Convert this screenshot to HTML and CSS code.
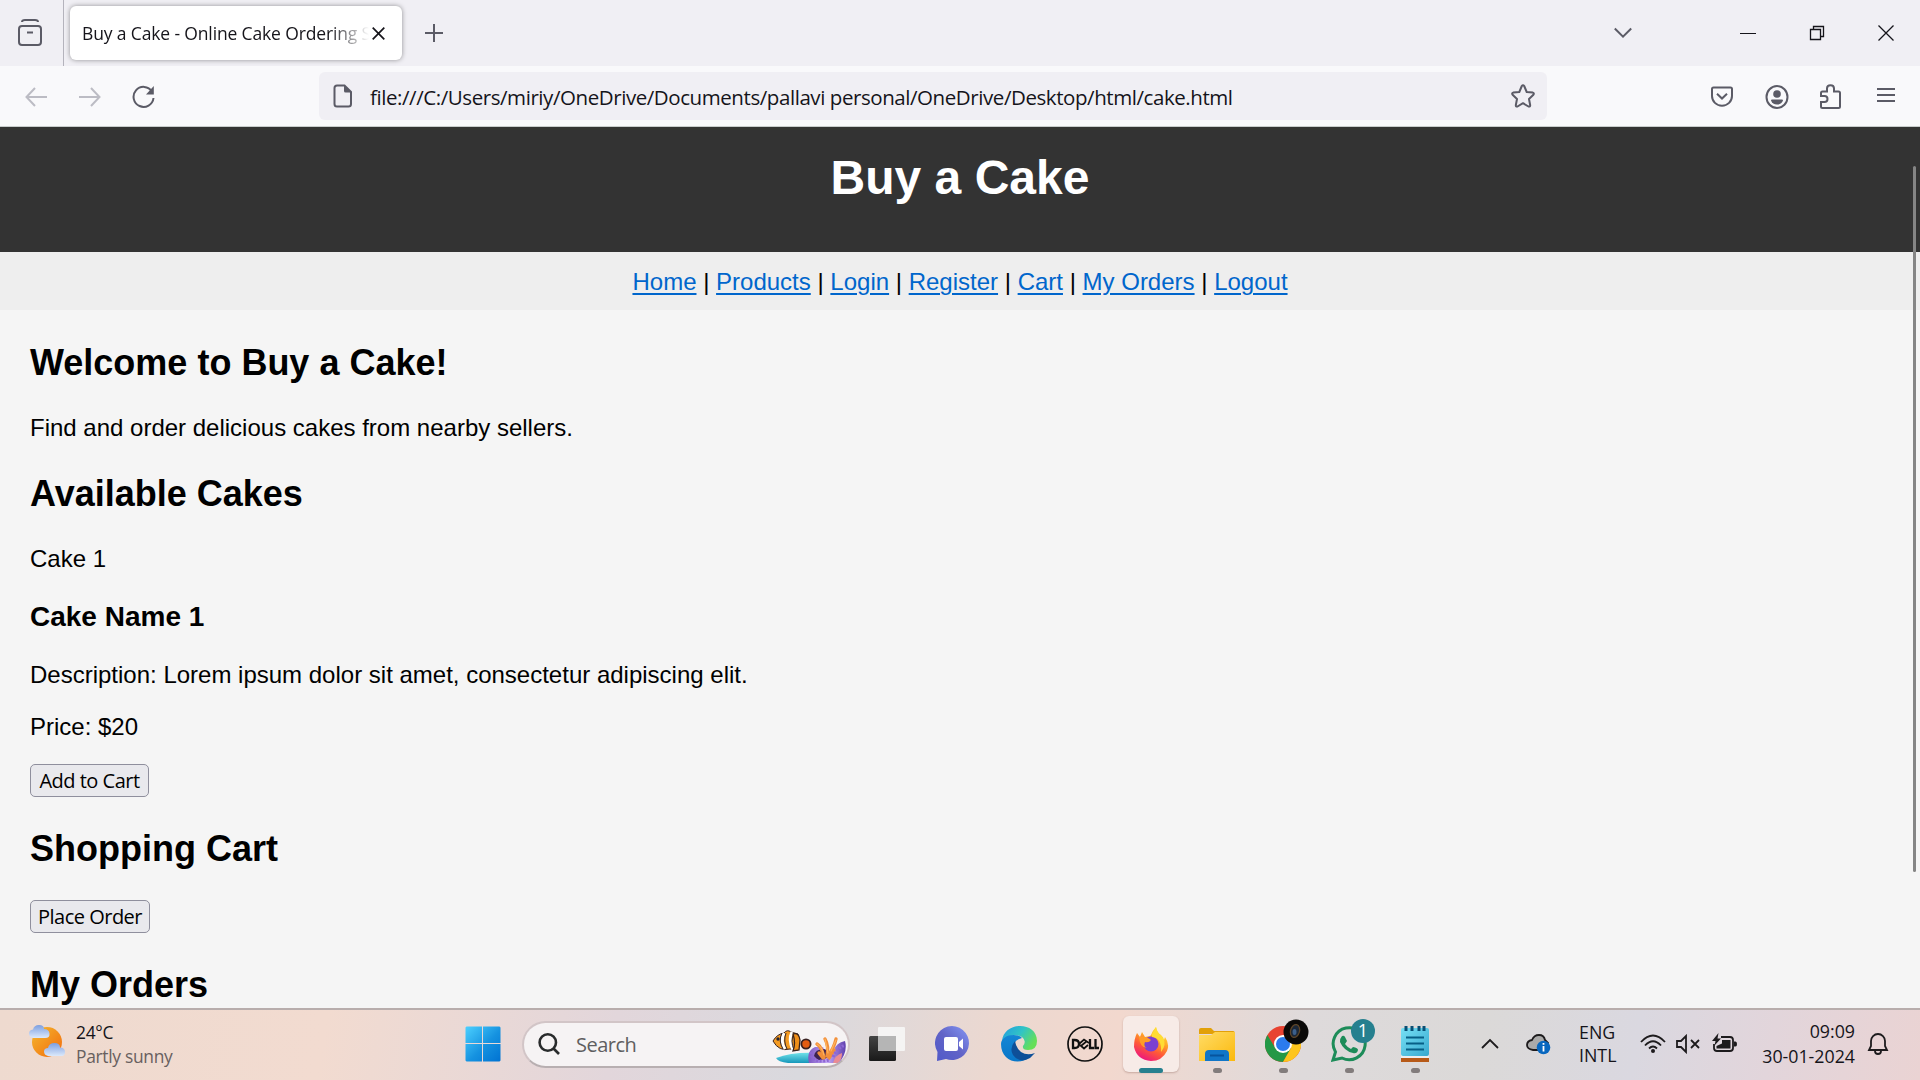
FILE: index.html
```html
<!DOCTYPE html>
<html lang="en">
<head>
<meta charset="utf-8">
<title>Buy a Cake - Online Cake Ordering System</title>
<link rel="stylesheet" href="styles.css">
</head>
<body>
<div class="tabs">
  <div class="view"><svg width="24" height="28" viewBox="0 0 24 28"><rect x="1" y="7" width="22" height="19" rx="3"/><path d="M4 3Q4 1 7 1H17Q20 1 20 3M9 13.500H15"/></svg></div>
  <div class="tab"><span class="tab-title">Buy a Cake - Online Cake Ordering System</span><svg width="13" height="13" viewBox="0 0 13 13"><path d="M.7.7 12.3 12.3M12.3.7.7 12.3"/></svg></div>
  <svg class="plus" width="18" height="18" viewBox="0 0 18 18"><path d="M9 0V18M0 9H18"/></svg>
  <div class="window-controls">
    <svg class="chev" width="18" height="12" viewBox="0 0 18 12"><path d="M.8 1.5 9 9.7 17.2 1.5"/></svg>
    <svg width="16" height="16" viewBox="0 0 16 16"><path d="M0 8.5H16" shape-rendering="crispEdges"/></svg>
    <svg width="16" height="16" viewBox="0 0 16 16"><path d="M1.5 4.5H11.5V14.5H1.5ZM4.5 4.5V1.5H14.5V11.5H11.5"/></svg>
    <svg width="16" height="16" viewBox="0 0 16 16"><path d="M.5.5 15.5 15.5M15.5.5.5 15.5"/></svg>
  </div>
</div>
<div class="toolbar">
  <div class="history">
    <svg class="dim" width="22" height="20" viewBox="0 0 22 20"><path d="M22 10H1.5M10 1 1.5 10 10 19"/></svg>
    <svg class="dim" width="22" height="20" viewBox="0 0 22 20"><path d="M0 10H20.5M12 1 20.5 10 12 19"/></svg>
    <svg width="24" height="24" viewBox="0 0 24 24"><path d="M20 6.500A10 10 0 1 0 21.500 13"/><path class="solid" d="M21.800 1V9.500H14Z"/></svg>
  </div>
  <div class="url">
    <svg width="20" height="24" viewBox="0 0 20 24"><path d="M4 1.5H11.5L18 8V20Q18 22.5 15.5 22.5H4Q1.5 22.5 1.5 20V4Q1.5 1.5 4 1.5Z"/><path class="solid" d="M11 1 18.5 8.5H12.5Q11 8.5 11 7Z"/></svg>
    <span class="address">file:///C:/Users/miriy/OneDrive/Documents/pallavi personal/OneDrive/Desktop/html/cake.html</span>
    <svg width="24" height="24" viewBox="0 0 24 24"><path stroke-linejoin="round" d="M10.8 2Q12 .3 13.2 2L15.7 8 21.8 8.6Q23.5 9.2 22.4 10.8L18 15 19.2 21.3Q19.2 23 17.5 22.5L12 19.2 6.5 22.5Q4.8 23 4.8 21.3L6 15 1.6 10.8Q.5 9.2 2.2 8.6L8.3 8Z"/></svg>
  </div>
  <div class="tools">
    <svg width="24" height="24" viewBox="0 0 24 24"><path d="M3.5 2.500H20.5Q22 2.500 22 4V11A10 9.7 0 0 1 2 11V4Q2 2.500 3.5 2.500ZM7 8.700 12 13.500 17 8.700"/></svg>
    <svg width="24" height="26" viewBox="0 0 24 26"><ellipse cx="12" cy="13" rx="10.500" ry="11"/><circle class="solid" cx="12" cy="10" r="3.8"/><path class="solid" d="M6 16.500Q6 15.500 7 15.500H17Q18 15.500 18 16.500Q16.500 20.500 12 20.500T6 16.500"/></svg>
    <svg width="24" height="26" viewBox="0 0 24 26"><path d="M2 12V9Q2 7.5 3.5 7.5H8V4.5Q8 1.2 11.5 1.2T15 4.5V7.5H19.5Q21 7.5 21 9V22.5Q21 24 19.5 24H3.5Q2 24 2 22.5V18H5.5Q8.5 18 8.5 15T5.5 12Z"/></svg>
    <svg width="24" height="24" viewBox="0 0 24 24"><path d="M3 4H21M3 10H21M3 16H21"/></svg>
  </div>
</div>
<div class="page">
  <header><h1>Buy a Cake</h1></header>
  <nav><a href="#">Home</a> | <a href="#">Products</a> | <a href="#">Login</a> | <a href="#">Register</a> | <a href="#">Cart</a> | <a href="#">My Orders</a> | <a href="#">Logout</a></nav>
  <main>
    <h2>Welcome to Buy a Cake!</h2>
    <p>Find and order delicious cakes from nearby sellers.</p>
    <h2>Available Cakes</h2>
    <p>Cake 1</p>
    <h3>Cake Name 1</h3>
    <p>Description: Lorem ipsum dolor sit amet, consectetur adipiscing elit.</p>
    <p class="price">Price: $20</p>
    <button class="add">Add to Cart</button>
    <h2>Shopping Cart</h2>
    <button class="order">Place Order</button>
    <h2>My Orders</h2>
  </main>
  <div class="scroll-thumb"></div>
</div>
<footer class="taskbar">
  <div class="weather">
    <svg width="37" height="36" viewBox="0 0 37 36"><defs><linearGradient id="sun" x1="0" y1="0" x2="1" y2="1"><stop stop-color="#f4b92f"/><stop offset="1" stop-color="#f26a0c"/></linearGradient><linearGradient id="cloud" x1="0" y1="0" x2="0" y2="1"><stop stop-color="#7c9fe0"/><stop offset="1" stop-color="#dce9fb"/></linearGradient></defs><circle cx="18" cy="18" r="15" fill="url(#sun)"/><path fill="url(#cloud)" d="M4 14Q0 13 0 9.500T4 5.500Q5 1 10 1T15 5Q20 5 20.500 9.500T16 14Z"/><path fill="url(#cloud)" d="M19 32Q15 31 15 27.500T19 24Q20 19 25.500 19T31 23.500Q36 23.500 36 28T32 32Z"/></svg>
    <div class="two-lines"><span>24°C</span><span class="muted">Partly sunny</span></div>
  </div>
  <div class="apps">
    <svg class="start" width="36" height="36" viewBox="0 0 36 36"><defs><linearGradient id="win" x1="0" y1="0" x2="1" y2="1"><stop stop-color="#4cd0ff"/><stop offset=".55" stop-color="#1592e0"/><stop offset="1" stop-color="#0072d2"/></linearGradient></defs><path fill="url(#win)" d="M1.500.5H17V17H.5V1.500ZM18 .5H34.500L35.500 1.500V17H18ZM.5 18H17V35.500H1.500L.5 34.500ZM18 18H35.500V34.500L34.500 35.500H18Z"/></svg>
    <div class="search">
      <svg class="lens" width="23" height="23" viewBox="0 0 23 23"><circle cx="9.800" cy="9.500" r="8.200"/><path d="M15.500 15.500 21 21"/></svg>
      <span>Search</span>
      <svg class="reef" width="74" height="36" viewBox="0 0 74 36"><defs><linearGradient id="sea" x1="0" y1="0" x2="0" y2="1"><stop stop-color="#6fe0e8"/><stop offset="1" stop-color="#1797ba"/></linearGradient><linearGradient id="coral" x1="0" y1="0" x2="1" y2="0"><stop stop-color="#7d57c2"/><stop offset=".5" stop-color="#c3a8f4"/><stop offset="1" stop-color="#5f3fae"/></linearGradient></defs>
      <path fill="url(#sea)" d="M4 28Q20 22 44 23V33H16Q6 32 4 28Z"/>
      <path fill="#f59b22" stroke="#3b2420" d="M1 11Q5 4 12 3Q15-1 19 2L26 4V20L18 19Q7 22 1 11Z"/><path stroke="#fff" stroke-width="3" fill="none" d="M12 3Q8 11 13 19M20 2Q16 10 21 20"/><path stroke="#2b2635" fill="none" d="M10 3Q6 11 11 19M14 3Q11 11 15 19M22 3Q18 11 22 20"/><path fill="#ef8f19" stroke="#38231d" stroke-width="1.300" d="M21 4Q27 2 28 10L27 20L21 21Q24 13 21 4Z"/><circle cx="6" cy="9" r="1.700" fill="#223"/><circle cx="34" cy="14" r="4.600" fill="#e35c12" stroke="#3a2120" stroke-width="1.800"/>
      <path fill="url(#coral)" d="M37 33Q34 21 43 17L51 17 54 22 62 20Q64 13 73 11Q76 22 67 33Z"/><path fill="#3d2352" d="M42 26Q43 19 52 19L60 22Q55 31 46 30Z"/><path stroke="#f28f3a" stroke-width="3.400" stroke-linecap="round" fill="none" d="M52 28Q50 17 45 14M55 26Q57 16 53 9M56 26Q62 18 64 9M51 28 47 23M57 28 62 20"/><path stroke="#ffb35c" stroke-width="1.200" stroke-linecap="round" fill="none" d="M52 25Q50 17 45 14M56 23 53 9M59 21 64 10"/><path stroke="#8e66d4" stroke-width="3" stroke-dasharray="2 1.500" fill="none" d="M39 22Q39 32 52 31L58 30M61 27Q65 18 73 15"/><path fill="#e98c93" d="M61 33Q63 25 70 23Q70 30 66 33Z"/></svg>
    </div>
    <div class="app taskview"><svg width="36" height="36" viewBox="0 0 36 36"><defs><linearGradient id="tv" x1="0" y1="0" x2="0" y2="1"><stop stop-color="#444"/><stop offset="1" stop-color="#191919"/></linearGradient></defs><rect x="0" y="10" width="27" height="25" rx="1.500" fill="url(#tv)"/><rect x="9" y="1" width="27" height="24" rx="1" fill="#f7f7f7" opacity=".88"/><path fill="#b5b5b5" d="M9 10H27V25H9Z"/></svg></div>
    <div class="app"><svg width="36" height="36" viewBox="0 0 36 36"><defs><linearGradient id="chat" x1="0" y1="1" x2="1" y2="0"><stop stop-color="#5059c9"/><stop offset=".5" stop-color="#6264c7"/><stop offset="1" stop-color="#8498f5"/></linearGradient></defs><path fill="url(#chat)" d="M2 35 2.500 26A17 17 0 1 1 11 33Z"/><rect x="9" y="11" width="14" height="14" rx="2" fill="#fff"/><path fill="#fff" d="M24 16 28 12.500V23.500L24 20Z"/></svg></div>
    <div class="app"><svg width="36" height="36" viewBox="0 0 36 36"><defs><linearGradient id="edge" x1="0" y1="0" x2="1" y2=".5"><stop stop-color="#219be2"/><stop offset=".55" stop-color="#31c4c5"/><stop offset="1" stop-color="#66df58"/></linearGradient><linearGradient id="edge2" x1="0" y1="0" x2="0" y2="1"><stop stop-color="#1486d5"/><stop offset="1" stop-color="#0876c8"/></linearGradient></defs><path fill="url(#edge)" d="M1 15C3-5 36-5 36 15Q36 24 27 24Q21 24 22 20Q26 15 21 11Q13 6 1 15Z"/><path fill="url(#edge2)" d="M0 18C0 9 15 6 21 12Q12 14 13 22C14 31 23 34 30 30C18 41 0 35 0 18Z"/><path fill="#0e4f98" d="M14 15Q8 22 12 29Q19 38 29 32L34 27Q26 30 20 26Q15 22 14 15Z"/></svg></div>
    <div class="app"><svg width="36" height="36" viewBox="0 0 36 36"><circle cx="18" cy="18" r="17" fill="none" stroke="#111" stroke-width="1.700"/><g fill="none" stroke="#111" stroke-width="2.300"><path d="M6 14H7.500Q12 14 12 18T7.500 22H6ZM23 13V22H27M28.500 13V22H32"/><path stroke-width="1.700" d="M12 18 17 13.500 22 17M13 19 17 22.500 21 19M14.500 19.500 20 15"/></g></svg></div>
    <div class="app active"><svg width="36" height="36" viewBox="0 0 36 36"><defs><linearGradient id="fox" x1=".8" y1="0" x2=".3" y2="1"><stop stop-color="#ffed36"/><stop offset=".35" stop-color="#ffad28"/><stop offset=".65" stop-color="#ff5a36"/><stop offset="1" stop-color="#ec1282"/></linearGradient></defs><path fill="url(#fox)" d="M4 7 7 11 9 6 12 11Q18 10 18 9Q20 4 23 1Q24 7 28 9L31 14 32 11Q37 18 34 25Q29 35 18 35Q4 34 1 21Q1 13 4 7Z"/><circle cx="18" cy="18" r="7.500" fill="#7c3fd0"/><path fill="#ff9c27" d="M6 11Q13 10 18 14Q16 17 12 16Q10 20 14 22Q7 22 6 11Z"/><path fill="#ffdc34" d="M19 8 23 1Q24 7 30 11Q34 19 28 26Q29 12 19 11Z"/></svg></div>
    <div class="app running"><svg width="36" height="36" viewBox="0 0 36 36"><defs><linearGradient id="folder" x1="0" y1="0" x2="1" y2="1"><stop stop-color="#ffdc66"/><stop offset="1" stop-color="#fbb90d"/></linearGradient></defs><path fill="#e2a008" d="M0 4Q0 2 2 2H12L15 5H34Q36 5 36 8H0Z"/><path fill="url(#folder)" d="M0 9H12L16 6H36V35H0Z"/><path fill="#1176c8" d="M6 35V28Q6 24 10 24H26Q30 24 30 28V35Z"/><path stroke="#07549e" stroke-width="2" d="M11 29.500H25"/></svg></div>
    <div class="app running"><svg width="36" height="36" viewBox="0 0 36 36"><circle cx="18" cy="18" r="18" fill="#e84332"/><path fill="#249846" d="M2.400 9A18 18 0 0 0 18 36L26 22.500 10.500 22.500Z"/><path fill="#fdc51d" d="M18 9H33.600A18 18 0 0 1 18 36L26 22Z"/><circle cx="18" cy="18" r="9" fill="#fff"/><circle cx="18" cy="18" r="7" fill="#2b7bed"/></svg><svg class="profile" width="26" height="26" viewBox="0 0 26 26"><circle cx="13" cy="13" r="12.500" fill="#0a0908"/><ellipse cx="12" cy="12" rx="4.500" ry="6.500" fill="#1c2838" stroke="#5d4427" stroke-width="1.300" transform="rotate(15 12 12)"/><ellipse cx="11.500" cy="13" rx="2" ry="3" fill="#3c5f8a"/></svg></div>
    <div class="app running"><svg width="36" height="36" viewBox="0 0 36 36"><path fill="none" stroke="#1d8c59" stroke-width="3" d="M2 34 4.500 26A16 16 0 1 1 11 32Z"/><path fill="#1d8c59" d="M11 10Q13 9 14 11L16 15 14 18Q17 22 20 23L22 21Q27 22 27 24Q26 28 22 27Q13 25 9 16Q9 12 11 10Z"/></svg><span class="badge">1</span></div>
    <div class="app running"><svg width="36" height="36" viewBox="0 0 36 36"><defs><linearGradient id="note" x1="0" y1="0" x2="1" y2="1"><stop stop-color="#76e0f5"/><stop offset="1" stop-color="#38a9cf"/></linearGradient></defs><path fill="#b75a18" d="M4 29H32V36H4Z"/><path fill="#eee" d="M4 28H32V32H4Z"/><rect x="4" y="2" width="28" height="28" rx="2" fill="url(#note)"/><path fill="none" stroke="#075f86" stroke-width="2" d="M9 11.500H27M9 17.500H27M9 23.500H27"/><path fill="none" stroke="#084f74" stroke-width="3" d="M9 0V5M15 0V5M22 0V5M27 0V5"/></svg></div>
  </div>
  <div class="tray">
    <svg class="up" width="18" height="12" viewBox="0 0 18 12"><path d="M1 10 9 2 17 10"/></svg>
    <svg class="onedrive" width="25" height="22" viewBox="0 0 25 22"><path fill="#aaa" d="M7 17Q1 16 1 12T6 7Q8 2 13 2T19 7L22 10Q20 14 14 17Z"/><circle cx="17.500" cy="14.500" r="6.800" class="info"/><path class="info-mark" d="M17.500 13V18.500M17.500 10V11.800"/></svg>
    <div class="lang"><span>ENG</span><span>INTL</span></div>
    <svg class="wifi" width="26" height="20" viewBox="0 0 26 20"><path d="M1 8Q13-5 25 8M5 11.500Q13 3 21 11.500M9 14.500Q13 10.500 17 14.500"/><circle cx="13" cy="17" r="2" fill="#1d1b1d" stroke="none"/></svg>
    <svg class="speaker" width="24" height="20" viewBox="0 0 24 20"><path d="M1 7H5L10 2V18L5 13H1ZM15 6 23 14M23 6 15 14"/></svg>
    <svg class="battery" width="26" height="22" viewBox="0 0 26 22"><path d="M9 4H18Q21 4 21 7V15Q21 18 18 18H5Q2 18 2 15V11"/><path fill="#1d1b1d" stroke="none" d="M10 7H18.500V15.500H4.500V13L10 10.500ZM22 8.500H23.500Q25 8.500 25 11T23.500 13.500H22ZM6.500 0 0 8H3.500L2.500 12.500 9 5.500H5.500Z"/></svg>
    <div class="clock"><span>09:09</span><span>30-01-2024</span></div>
    <svg class="bell" width="22" height="24" viewBox="0 0 22 24"><path d="M2 18H20L18 14V9A7 7 0 0 0 4 9V14ZM8 19A3 3 0 0 0 14 19"/></svg>
  </div>
</footer>
</body>
</html>
```
FILE: styles.css
```css
* { box-sizing: border-box; }
body { margin: 0; width: 1920px; height: 1080px; overflow: hidden; display: flex; flex-direction: column; font-family: "Open Sans", "Noto Sans", sans-serif; color: #15141a; }
svg { display: block; flex: none; }

.tabs { height: 66px; background: #f0eff4; display: flex; align-items: center; flex: none; }
.tabs svg { fill: none; stroke: #5b5b66; stroke-width: 2; }
.view { width: 64px; height: 66px; border-right: 1px solid #b4b3bc; display: flex; align-items: center; padding-left: 18px; }
.tab { margin-left: 6px; width: 332px; height: 54px; border-radius: 6px; background: #fff; box-shadow: 0 0 5px rgba(0,0,0,.4); display: flex; align-items: center; padding-left: 12px; }
.tab-title { width: 287px; margin-right: 3px; overflow: hidden; white-space: nowrap; font-size: 17.5px; letter-spacing: -.14px; -webkit-mask-image: linear-gradient(90deg, #000 86%, transparent); mask-image: linear-gradient(90deg, #000 86%, transparent); }
.tab svg { stroke: #15141a; stroke-width: 1.7; }
.plus { margin-left: 23px; }
.window-controls { margin-left: auto; display: flex; align-items: center; padding-right: 26px; gap: 53px; }
.window-controls svg { stroke: #15141a; stroke-width: 1.3; }
.window-controls .chev { stroke: #5b5b66; stroke-width: 2; margin-right: 55px; }

.toolbar { height: 61px; background: #f9f9fb; border-bottom: 1px solid #c8cccc; display: flex; align-items: center; flex: none; }
.toolbar svg { fill: none; stroke: #5b5b66; stroke-width: 2; }
.toolbar .solid { fill: #5b5b66; stroke: none; }
.toolbar .dim { stroke: #bcbcc4; }
.history { width: 319px; padding: 2px 0 0 25px; display: flex; align-items: center; gap: 32px; }
.history svg:last-child { margin-left: -1px; }
.url { width: 1228px; height: 48px; border-radius: 6px; background: #f0eff4; display: flex; align-items: center; padding: 0 12px 0 14px; }
.address { flex: 1; padding: 2px 0 0 17px; font-size: 20.5px; letter-spacing: -.43px; white-space: nowrap; }
.tools { padding: 1px 0 0 163px; display: flex; align-items: center; gap: 30.5px; }

.page { position: relative; flex: none; height: 881px; overflow: hidden; background: #f5f5f5; color: #000; font-family: "Liberation Sans", Arial, sans-serif; font-size: 24px; line-height: 28px; }
header { height: 125px; padding-top: 23px; background: #333; color: #fff; text-align: center; }
h1 { margin: 0; font-size: 48px; line-height: 56px; }
nav { height: 58px; padding-top: 16px; background: #eee; text-align: center; }
nav a { color: #06c; text-decoration: underline; text-decoration-thickness: 2px; text-underline-offset: 3px; }
main { padding: 1px 30px 0; display: flow-root; }
h2 { font-size: 36px; line-height: 43px; margin: 30px 0; }
h3 { font-size: 28px; line-height: 32px; margin: 28px 0; }
p { margin: 24px 0; }
.price { margin-bottom: 23px; }
main button { display: block; height: 33px; padding: 0; border: 1px solid #8f8f9d; border-radius: 5px; background: #e9e9ed; color: #000; font: 20px/31px "Open Sans", sans-serif; letter-spacing: -.5px; }
.add { width: 119px; }
.order { width: 120px; }
.scroll-thumb { position: absolute; right: 4px; top: 39px; width: 3px; height: 706px; border-radius: 2px; background: #858585; }

.taskbar { height: 72px; flex: none; border-top: 2px solid #b8adac; display: flex; align-items: center; padding-bottom: 2px; background: linear-gradient(100deg, #eedacf 0%, #f2dbd0 17%, #e2d6db 32%, #d9d9de 42%, #ecd8d0 52%, #f2d8ce 58%, #dedadb 68%, #dbd9d8 77%, #dad8e0 85%, #e2d5db 92%, #ead3d3 100%); font-size: 17.4px; line-height: 25px; }
.weather { width: 465px; padding-left: 29px; display: flex; gap: 10px; align-items: center; }
.two-lines, .lang, .clock { display: flex; flex-direction: column; white-space: nowrap; }
.two-lines { letter-spacing: -.3px; line-height: 24px; }
.weather svg { margin-top: -4px; }
.muted { color: #68605f; }
.apps { display: flex; align-items: center; }
.search { margin-left: 21px; width: 328px; height: 47px; border: 2px solid #d2c5c7; border-bottom-color: #b8afb1; border-radius: 24px; background: #f6f3f4; display: flex; align-items: center; padding-left: 14px; color: #5f5e60; font-size: 20px; overflow: hidden; }
.search span { margin-left: 15px; width: 64px; letter-spacing: -.5px; }
.lens { fill: none; stroke: #292b2c; stroke-width: 2.6; }
.reef { margin-left: 132px; align-self: flex-end; }
.app { position: relative; width: 56px; height: 56px; margin-left: 10px; display: flex; align-items: center; justify-content: center; }
.taskview { margin-left: 9px; }
.active { background: #f7ebe7; border-radius: 6px; box-shadow: 0 1px 2px rgba(120,80,70,.35); }
.active::after, .running::after { content: ""; position: absolute; bottom: -1px; width: 9px; height: 5px; border-radius: 3px; background: #827c7c; }
.active::after { width: 24px; background: #26808f; }
.profile { position: absolute; left: 28px; top: 3px; }
.badge { position: absolute; left: 30px; top: 3px; width: 24px; height: 24px; border-radius: 50%; background: #26808f; color: #fff; text-align: center; line-height: 23px; font-size: 18px; }
.tray { margin-left: auto; display: flex; align-items: center; padding-right: 31px; line-height: 23px; font-size: 17.8px; }
.tray svg { fill: none; stroke: #1d1b1d; stroke-width: 1.8; }
.tray .info { fill: #0867bf; stroke: none; }
.tray .info-mark { stroke: #fff; }
.onedrive { margin-left: 27px; }
.lang { margin-left: 28px; width: 36px; }
.wifi { margin-left: 25px; }
.speaker { margin-left: 10px; }
.battery { margin-left: 12px; }
.clock { margin-left: 22px; width: 95px; line-height: 25px; align-items: flex-end; }
.bell { margin-left: 12px; }
```
